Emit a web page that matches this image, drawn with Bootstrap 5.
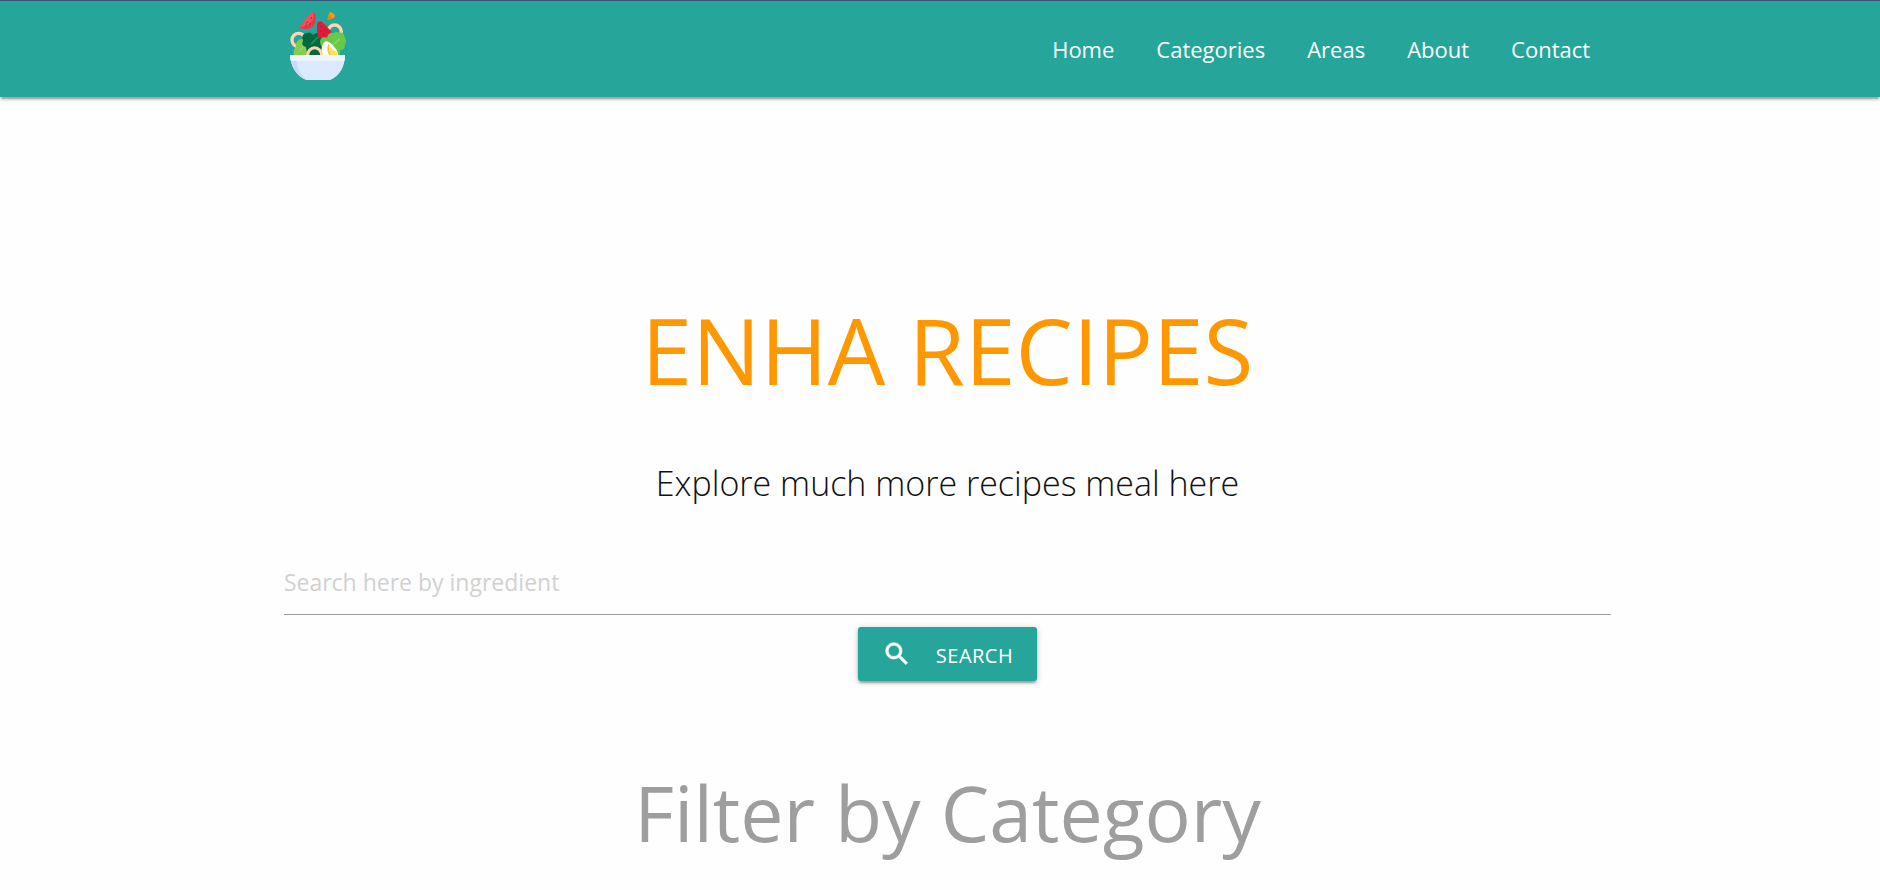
<!DOCTYPE html>
<html lang="en">
<head>
<meta charset="utf-8">
<meta name="viewport" content="width=device-width, initial-scale=1">
<title>Enha Recipes</title>
<link href="https://cdn.jsdelivr.net/npm/bootstrap@5.3.0/dist/css/bootstrap.min.css" rel="stylesheet">
<style>
  :root { --teal: #26a69a; --raised: 0 2px 3px rgba(0,0,0,.2), 0 4px 1px -2px rgba(0,0,0,.12), 0 1px 6px rgba(0,0,0,.2); }
  body { font-family: "Open Sans", "Noto Sans", sans-serif; background: #fefefe; color: #111; }
  .page-wrap { width: 70.6%; margin-left: 15.1%; }
  .site-nav { background: var(--teal); border-top: 1px solid #36567c; box-shadow: var(--raised); }
  .site-nav .nav-link { color: #fff; font-size: 22px; line-height: 32px; padding: 32px 21px; }
  .hero { padding-top: 200px; }
  .hero-title { font-size: 91px; line-height: 106px; color: #ff9800; font-weight: 400; margin-bottom: 60px; }
  .hero-sub { font-size: 34px; line-height: 40px; font-weight: 300; margin-bottom: 46px; }
  .search-box { border: 0; border-bottom: 1px solid #9e9e9e; background: transparent; font-size: 23px; height: 66px; outline: 0; }
  .search-box::placeholder { color: #d1d1d1; opacity: 1; }
  .search-btn { background: var(--teal); color: #fff; border: 0; border-radius: 3px; height: 54px; margin-top: 12px; padding: 0 24px; font-size: 20px; letter-spacing: .5px; box-shadow: var(--raised); }
  .search-btn:hover { background: #2bbbad; color: #fff; }
  .section-title { font-size: 77px; line-height: 88px; color: #9e9e9e; font-weight: 400; }
  .category-section { padding-top: 88px; }
</style>
</head>
<body>
<header class="site-nav">
  <nav class="page-wrap d-flex justify-content-between align-items-start" aria-label="Main">
    <a href="#" class="d-block" aria-label="Enha Recipes home">
      <svg class="d-block" width="68" height="80" viewBox="12 3 204 240" aria-hidden="true">
        <path d="M58 81Q67 68 78 56L96 37Q107 38 107 54Q106 86 80 87Q66 87 58 81Z" fill="#ff4b55"/>
        <path d="M58 81Q84 82 96 64Q103 53 100 37Q109 42 107 57Q105 85 81 87Q65 87 58 81Z" fill="#e8344c"/>
        <path d="M79 70l4-5M88 74l3-5M92 57l3-5M76 77l4-3" stroke="#8c2635" stroke-width="3"/>
        <path d="M148 36Q163 38 166 49Q157 59 142 59Z" fill="#ff9811"/><path d="M148 36l-6 23q8 1 13-2Z" fill="#ee8700"/>
        <circle cx="56" cy="120" r="20" fill="none" stroke="#ffd5b0" stroke-width="10"/>
        <circle cx="164" cy="95" r="20" fill="none" stroke="#ffd5b0" stroke-width="10"/>
        <path d="M42 166Q38 148 48 142Q45 128 56 121Q64 112 73 121Q84 139 83 166Z" fill="#88cc4f"/>
        <path d="M58 153l18-20" stroke="#a9dc76" stroke-width="3"/>
        <path d="M78 141Q62 137 69 122Q62 101 80 99Q92 94 99 105Q113 92 123 107Q128 116 121 124L131 166H82Z" fill="#00693f"/>
        <path d="M94 131l20-20" stroke="#239464" stroke-width="4"/>
        <path d="M112 68Q119 61 126 65L155 95L137 113L116 114Q108 88 112 68Z" fill="#e31937"/>
        <path d="M121 78l4 4M121 91l3 5M132 88l5 5M128 102l4 3" stroke="#8c2635" stroke-width="3"/>
        <path d="M122 134Q116 117 130 112Q138 114 143 113Q143 97 160 99Q171 94 176 98Q193 94 194 112Q203 124 194 134Q196 149 180 151V166H140Z" fill="#67c947"/>
        <path d="M142 149l37-32" stroke="#8ddb65" stroke-width="4"/>
        <path d="M124 166Q122 133 136 124Q149 124 162 140Q174 151 174 166Z" fill="#fff"/>
        <path d="M144 134Q150 138 156 146L172 159V166H148Q139 153 144 134Z" fill="#ffe15a"/>
        <path d="M146 134Q141 151 151 166" fill="none" stroke="#edc437" stroke-width="4"/>
        <path d="M83 166a21 23 0 0 1 42 0" fill="none" stroke="#ffd5b0" stroke-width="9"/>
        <path d="M30 165H195Q194 220 151 240H78Q34 220 30 165Z" fill="#dbeaff"/>
        <path d="M30 165H48Q49 221 83 240H78Q34 220 30 165Z" fill="#c6dcf8"/>
        <path d="M30 165H195L194 182H32Z" fill="#eff6ff"/>
      </svg>
    </a>
    <ul class="nav flex-nowrap">
      <li class="nav-item"><a class="nav-link" href="#">Home</a></li>
      <li class="nav-item"><a class="nav-link" href="#categories">Categories</a></li>
      <li class="nav-item"><a class="nav-link" href="#areas">Areas</a></li>
      <li class="nav-item"><a class="nav-link" href="#about">About</a></li>
      <li class="nav-item"><a class="nav-link" href="#contact">Contact</a></li>
    </ul>
  </nav>
</header>
<main class="page-wrap text-center">
  <section class="hero">
    <h1 class="hero-title">ENHA RECIPES</h1>
    <p class="hero-sub">Explore much more recipes meal here</p>
    <form onsubmit="return false">
      <input class="search-box d-block w-100 p-0" type="text" placeholder="Search here by ingredient" aria-label="Search here by ingredient">
      <button class="search-btn btn d-inline-flex align-items-center gap-4" type="submit">
        <svg width="30" height="30" viewBox="0 0 24 24" fill="currentColor" stroke="currentColor" stroke-width=".5" aria-hidden="true"><path d="M15.500 14h-.79l-.28-.27C15.410 12.590 16 11.110 16 9.500 16 5.910 13.090 3 9.500 3S3 5.910 3 9.500 5.910 16 9.500 16c1.610 0 3.090-.59 4.230-1.570l.27.28v.79l5 4.990L20.490 19l-4.990-5zm-6 0C7.010 14 5 11.990 5 9.500S7.010 5 9.500 5 14 7.010 14 9.500 11.990 14 9.500 14z"/></svg>
        <span class="pt-1">SEARCH</span>
      </button>
    </form>
  </section>
  <section id="categories" class="category-section pb-4">
    <h2 class="section-title mb-0">Filter by Category</h2>
  </section>
</main>
<script src="https://cdn.jsdelivr.net/npm/bootstrap@5.3.0/dist/js/bootstrap.bundle.min.js"></script>
</body>
</html>
